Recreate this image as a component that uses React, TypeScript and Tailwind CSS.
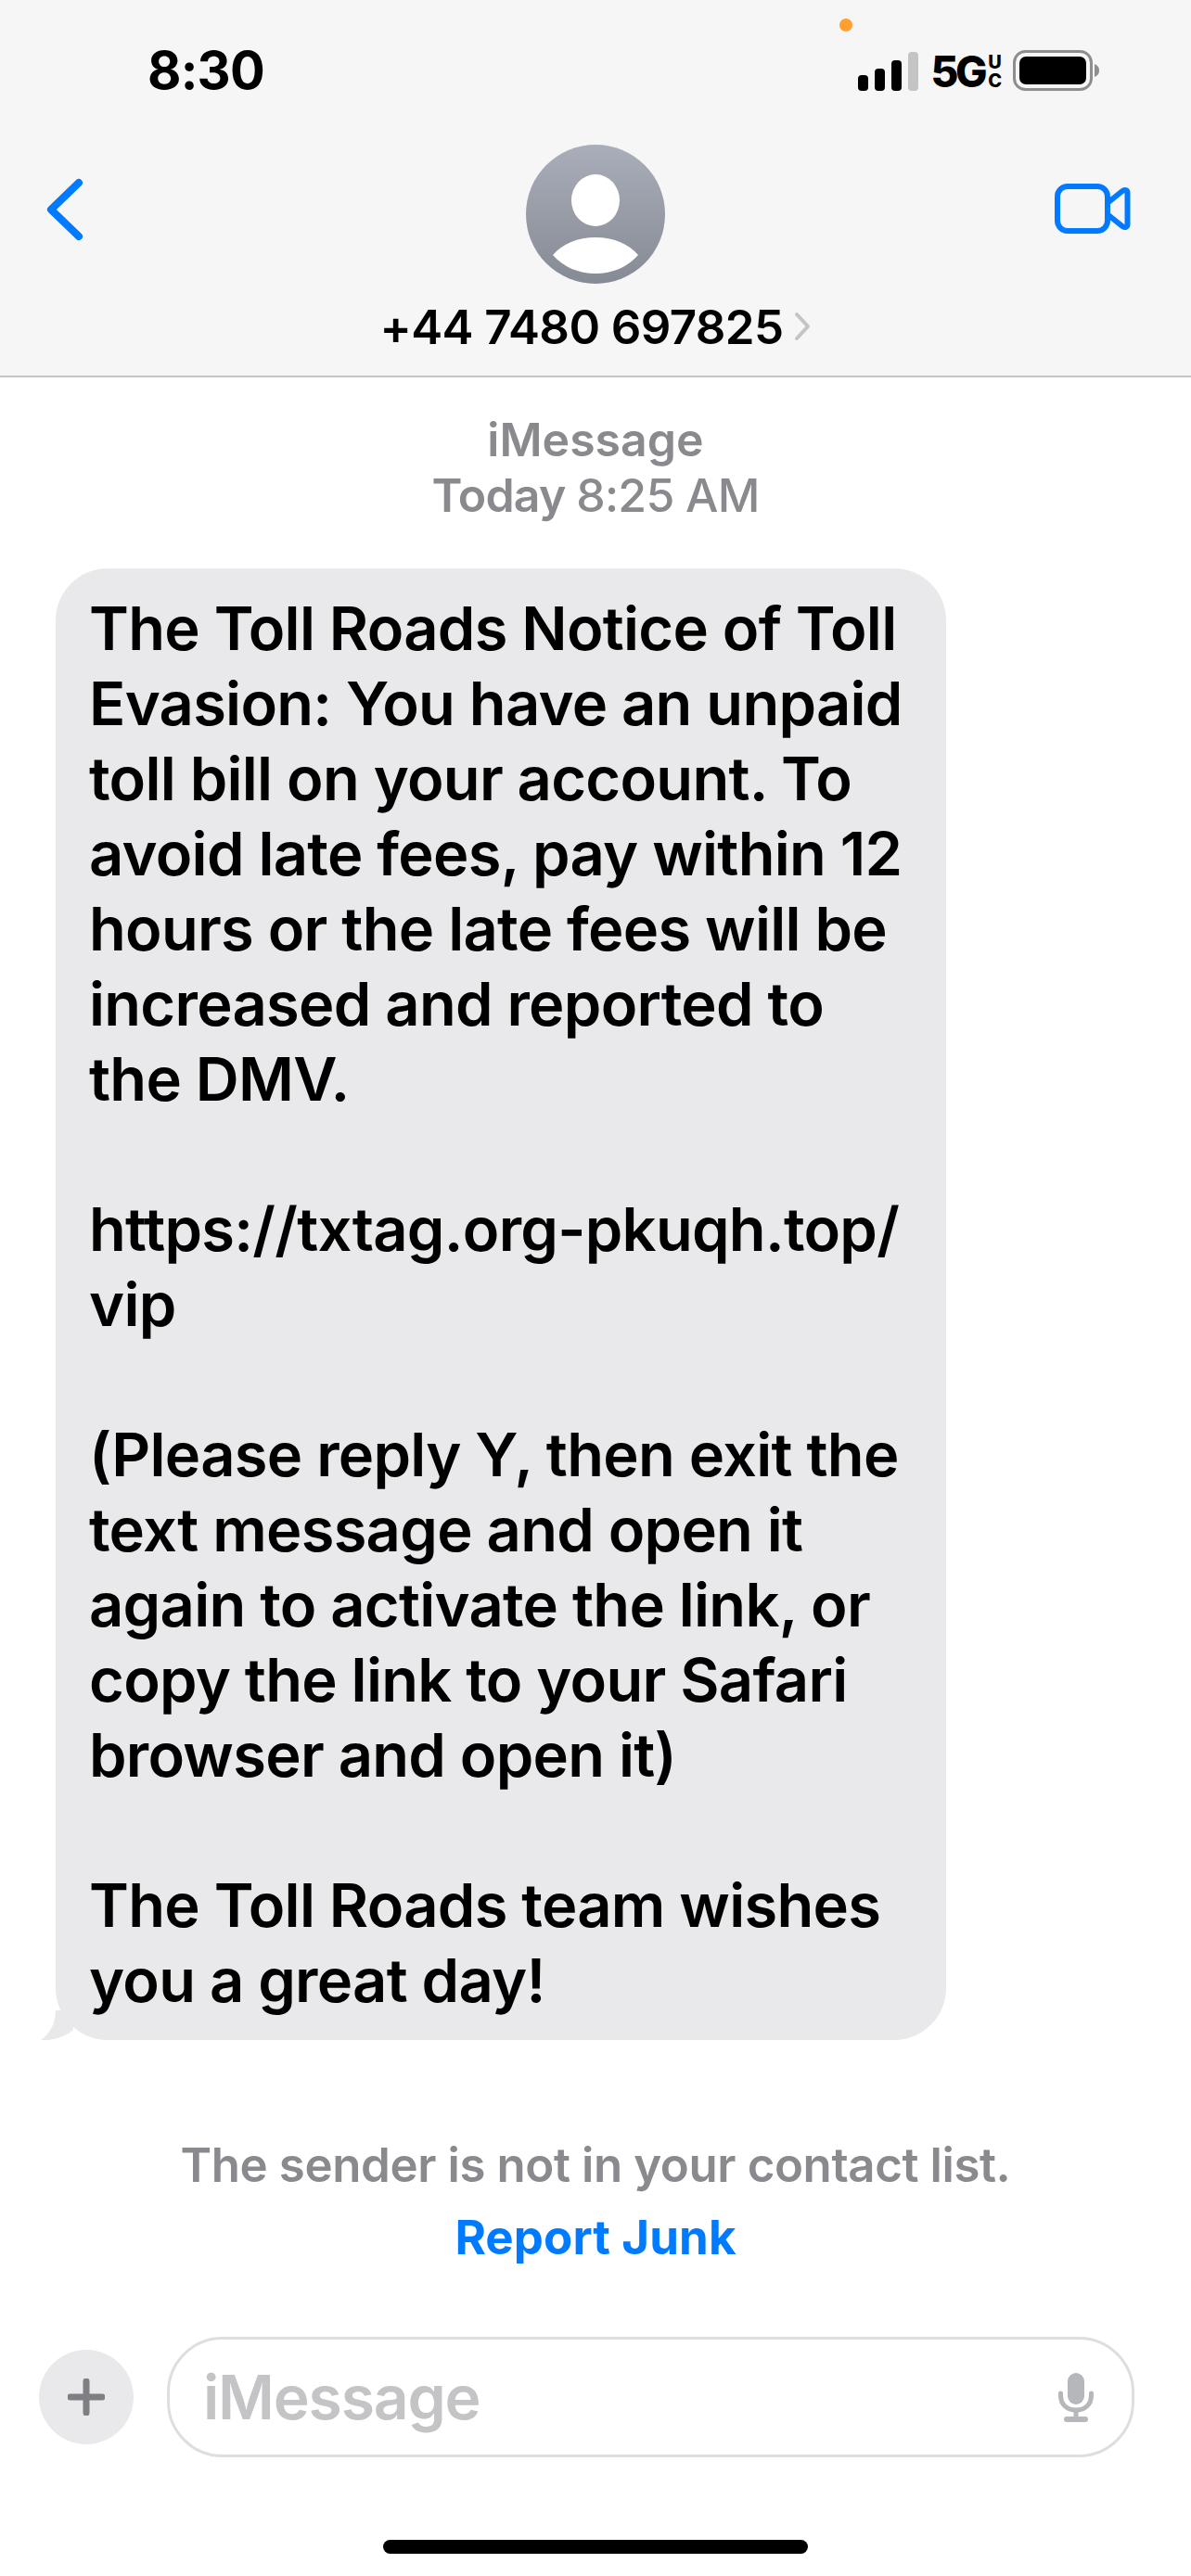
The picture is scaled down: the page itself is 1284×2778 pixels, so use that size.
import React from "react";

const messageLines = [
  "The Toll Roads Notice of Toll",
  "Evasion: You have an unpaid",
  "toll bill on your account. To",
  "avoid late fees, pay within 12",
  "hours or the late fees will be",
  "increased and reported to",
  "the DMV.",
  "",
  "https://txtag.org-pkuqh.top/",
  "vip",
  "",
  "(Please reply Y, then exit the",
  "text message and open it",
  "again to activate the link, or",
  "copy the link to your Safari",
  "browser and open it)",
  "",
  "The Toll Roads team wishes",
  "you a great day!",
];

const SignalBars = () => (
  <svg width="66" height="42" viewBox="0 0 66 42">
    <rect x="0" y="25" width="11" height="17" rx="4" fill="#000" />
    <rect x="18" y="18" width="11" height="24" rx="4" fill="#000" />
    <rect x="36" y="9" width="11" height="33" rx="4" fill="#000" />
    <rect x="54" y="0" width="11" height="42" rx="4" fill="#c4c4c4" />
  </svg>
);

const Battery = () => (
  <svg width="94" height="44" viewBox="0 0 94 44">
    <rect x="1.5" y="1.5" width="83" height="41" rx="12" fill="none" stroke="#8e8e8e" strokeWidth="3" />
    <rect x="7" y="7" width="72" height="30" rx="7" fill="#000" />
    <path d="M88 15 C92 17 93 19 93 22 C93 25 92 27 88 29 Z" fill="#8e8e8e" />
  </svg>
);

const Avatar = () => (
  <svg width="150" height="150" viewBox="0 0 150 150">
    <defs>
      <linearGradient id="avatarFill" x1="0" y1="0" x2="0" y2="1">
        <stop offset="0" stopColor="#a9aeba" />
        <stop offset="1" stopColor="#858a94" />
      </linearGradient>
    </defs>
    <circle cx="75" cy="75" r="75" fill="url(#avatarFill)" />
    <ellipse cx="75" cy="60" rx="26" ry="28" fill="#fff" />
    <path d="M29 119 C39 107 56 100 75 100 C94 100 111 107 121 119 C110 132 93 139 75 139 C57 139 40 132 29 119 Z" fill="#fff" />
  </svg>
);

const VideoIcon = () => (
  <svg width="82" height="54" viewBox="0 0 82 54" fill="none" stroke="#007aff" strokeWidth="6" strokeLinejoin="round">
    <rect x="3" y="3" width="54" height="48" rx="11" />
    <path d="M58 20 L73 8 C75.5 6 78.5 7 78.5 10 V44 C78.5 47 75.5 48 73 46 L58 34" />
  </svg>
);

const MicIcon = () => (
  <svg width="40" height="53" viewBox="0 0 40 53" fill="none">
    <rect x="11" y="0" width="18" height="34" rx="9" fill="#b5b7bb" />
    <path d="M3.5 22 V24 C3.5 34 10 40 20 40 C30 40 36.5 34 36.5 24 V22" stroke="#b5b7bb" strokeWidth="5" strokeLinecap="round" />
    <rect x="17.5" y="40" width="5" height="9" fill="#b5b7bb" />
    <rect x="7" y="47" width="26" height="6" rx="3" fill="#b5b7bb" />
  </svg>
);

export default function App() {
  return (
    <div className="w-[1284px] h-[2778px] bg-white flex flex-col font-['Inter',sans-serif] overflow-hidden">
      {/* Header */}
      <div className="relative h-[407px] bg-[#f6f6f6] border-b-2 border-[#c6c6c8] shrink-0">
        <div className="absolute left-[905px] top-[20px] w-[14px] h-[14px] rounded-full bg-[#ffa02e]" />

        <div className="flex items-center h-[44px] mt-[54px] pl-[159px] pr-[98px] absolute inset-x-0 top-0">
          <span className="text-[56px] font-bold leading-none tracking-[-0.8px] text-black">8:30</span>
          <div className="ml-auto flex items-end">
            <SignalBars />
            <div className="flex items-center h-[42px] ml-[13px] mr-[12px]">
              <span className="text-[46px] font-extrabold leading-none tracking-[-3.5px] text-black">5G</span>
              <span className="flex flex-col text-[20px] font-extrabold leading-[20px] ml-[4px] text-black">
                <span>U</span>
                <span>C</span>
              </span>
            </div>
            <Battery />
          </div>
        </div>

        <div className="flex items-start justify-between pl-[49px] pr-[65px] pt-[192px]">
          <svg width="42" height="68" viewBox="0 0 42 68" fill="none">
            <path d="M36 5 L6 34 L36 63" stroke="#007aff" strokeWidth="8" strokeLinecap="round" strokeLinejoin="round" />
          </svg>
          <div className="mt-[6px]">
            <VideoIcon />
          </div>
        </div>

        <div className="absolute inset-x-0 top-[156px] flex flex-col items-center">
          <Avatar />
          <div className="flex items-center mt-[18px] h-[56px]">
            <span className="text-[51px] font-semibold leading-none tracking-[-0.6px] text-black">+44 7480 697825</span>
            <svg className="ml-[10px]" width="20" height="32" viewBox="0 0 20 32" fill="none">
              <path d="M4 3 L16 16 L4 29" stroke="#c4c4c6" strokeWidth="4" strokeLinecap="round" strokeLinejoin="round" />
            </svg>
          </div>
        </div>
      </div>

      {/* Timestamp */}
      <div className="flex flex-col items-center pt-[37px] text-[#8a8a8e] text-[50px] leading-[60px] font-semibold">
        <span>iMessage</span>
        <span className="tracking-[-0.8px]">
          <span>Today</span> <span className="font-medium">8:25 AM</span>
        </span>
      </div>

      {/* Bubble */}
      <div className="relative ml-[60px] mt-[49px] w-[960px] bg-[#e9e9eb] rounded-[56px] pl-[36px] py-[24px]">
        <div className="text-[65px] leading-[81px] font-semibold tracking-[-0.72px] text-black whitespace-nowrap">
          {messageLines.map((line, i) => (
            <div key={i} className="h-[81px]">
              {line}
            </div>
          ))}
        </div>
        <svg className="absolute left-[-16px] bottom-0" width="50" height="40" viewBox="0 0 50 40">
          <path d="M16 8 C16 22 10 33 0 40 C12 41 26 37 35 29 L35 8 Z" fill="#e9e9eb" />
        </svg>
      </div>

      {/* Unknown sender */}
      <div className="flex flex-col items-center mt-[96px] text-[51px] leading-[78px] font-semibold tracking-[-0.4px]">
        <span className="text-[#8a8a8e]">The sender is not in your contact list.</span>
        <span className="text-[#007aff] font-bold tracking-[0.1px]">Report Junk</span>
      </div>

      {/* Input bar */}
      <div className="flex items-center mt-[68px] pl-[42px] pr-[61px] gap-[36px]">
        <div className="w-[102px] h-[102px] rounded-full bg-[#e9e9eb] flex items-center justify-center shrink-0">
          <svg width="40" height="40" viewBox="0 0 40 40">
            <path d="M20 3 V37 M3 20 H37" stroke="#7e7e83" strokeWidth="7" strokeLinecap="round" />
          </svg>
        </div>
        <div className="flex-1 h-[130px] rounded-[60px] border-[3px] border-[#dedee0] flex items-center pl-[36px] pr-[40px]">
          <span className="text-[66px] font-semibold leading-none tracking-[-1.2px] text-[#c4c4c6]">iMessage</span>
          <div className="ml-auto">
            <MicIcon />
          </div>
        </div>
      </div>

      {/* Home indicator */}
      <div className="mt-auto mb-[24px] mx-auto w-[458px] h-[15px] rounded-full bg-black" />
    </div>
  );
}
